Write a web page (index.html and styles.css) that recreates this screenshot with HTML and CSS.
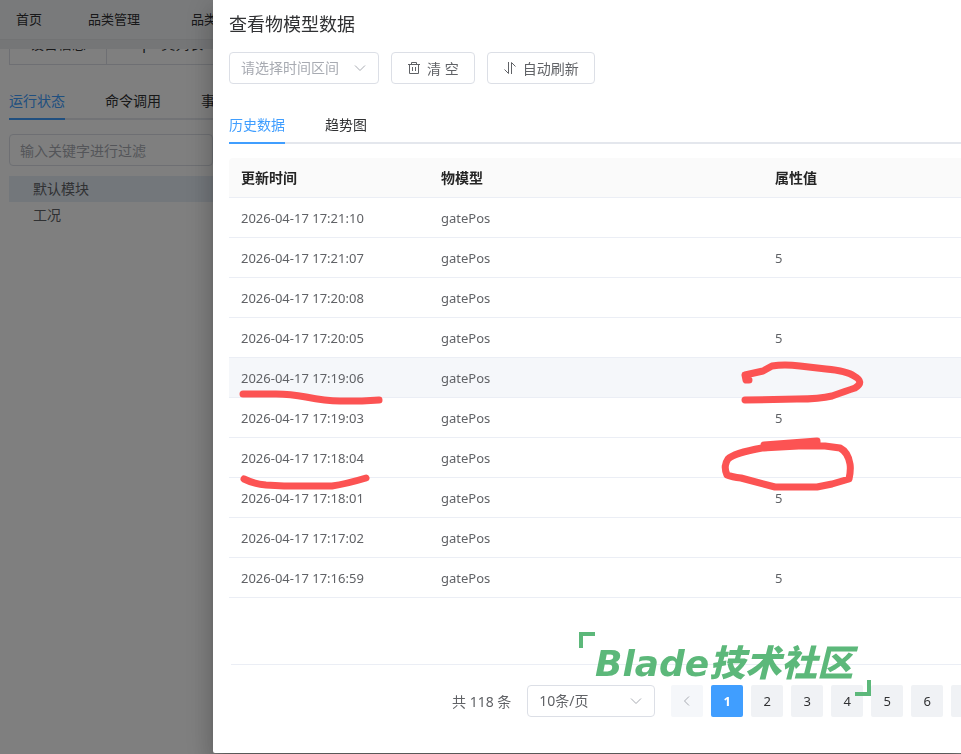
FILE: index.html
```html
<!DOCTYPE html>
<html lang="zh-CN">
<head>
  <meta charset="UTF-8">
  <title>查看物模型数据</title>
  <link rel="stylesheet" href="styles.css">
</head>
<body>
  <div class="page">
    <nav class="topnav">
      <a class="home" href="#">首页</a>
      <a href="#">品类管理</a>
      <a href="#">品类</a>
    </nav>
    <main class="content">
      <div class="card-tabs">
        <button>设备信息</button>
        <button>Topic类列表</button>
      </div>
      <div class="tabs">
        <button class="active">运行状态</button>
        <button>命令调用</button>
        <button>事件管理</button>
      </div>
      <div class="side">
        <input class="filter" type="text" placeholder="输入关键字进行过滤" aria-label="过滤">
        <ul class="tree">
          <li class="current">默认模块</li>
          <li>工况</li>
        </ul>
      </div>
    </main>
  </div>

  <div class="overlay">
    <section class="drawer">
      <h2>查看物模型数据</h2>
      <div class="toolbar">
        <div class="select range">
          <select aria-label="时间区间"><option>请选择时间区间</option></select>
          <svg viewBox="0 0 14 14"><path d="M2 4.5l5 5 5-5"/></svg>
        </div>
        <button class="btn">
          <svg viewBox="0 0 14 14"><path d="M1 3.5h12M4.5 3.5v-2h5v2M2.5 3.5v9h9v-9M5.5 6v4M8.5 6v4"/></svg>
          <span>清 空</span>
        </button>
        <button class="btn">
          <svg viewBox="0 0 14 14"><path d="M5.5 1v11.5L1.5 8.5M8.5 13V1.5l4 4"/></svg>
          <span>自动刷新</span>
        </button>
      </div>

      <div class="tabs">
        <button class="active">历史数据</button>
        <button>趋势图</button>
      </div>

      <table>
        <thead>
          <tr><th class="col-time">更新时间</th><th class="col-model">物模型</th><th>属性值</th></tr>
        </thead>
        <tbody>
          <tr><td>2026-04-17 17:21:10</td><td>gatePos</td><td></td></tr>
          <tr><td>2026-04-17 17:21:07</td><td>gatePos</td><td>5</td></tr>
          <tr><td>2026-04-17 17:20:08</td><td>gatePos</td><td></td></tr>
          <tr><td>2026-04-17 17:20:05</td><td>gatePos</td><td>5</td></tr>
          <tr class="hover"><td>2026-04-17 17:19:06</td><td>gatePos</td><td></td></tr>
          <tr><td>2026-04-17 17:19:03</td><td>gatePos</td><td>5</td></tr>
          <tr><td>2026-04-17 17:18:04</td><td>gatePos</td><td></td></tr>
          <tr><td>2026-04-17 17:18:01</td><td>gatePos</td><td>5</td></tr>
          <tr><td>2026-04-17 17:17:02</td><td>gatePos</td><td></td></tr>
          <tr><td>2026-04-17 17:16:59</td><td>gatePos</td><td>5</td></tr>
        </tbody>
      </table>

      <footer class="pager">
        <span class="total">共 118 条</span>
        <div class="select size">
          <select aria-label="每页条数"><option>10条/页</option></select>
          <svg viewBox="0 0 14 14"><path d="M2 4.5l5 5 5-5"/></svg>
        </div>
        <div class="pages">
          <button disabled aria-label="上一页"><svg viewBox="0 0 14 14"><path d="M9 2.5L4.5 7 9 11.5"/></svg></button>
          <button class="active">1</button>
          <button>2</button>
          <button>3</button>
          <button>4</button>
          <button>5</button>
          <button>6</button>
          <button aria-label="更多"></button>
        </div>
      </footer>

      <!-- pen marks over the table -->
      <svg class="marks" viewBox="230 355 640 140">
        <path d="M243 394H276Q290 394 306 397Q326 401 340 401H362L379 400"/>
        <path d="M244 479Q254 484 266 485L284 486H332Q346 484 366 478"/>
        <path d="M749 380L746 380L745 375L763 371L772 366Q784 364 800 366L826 369Q847 371 854 376Q865 382 855 388Q846 391 832 396Q820 399 797 399L745 400"/>
        <path d="M764 445L817 441V445L762 448Q734 453 728 459Q723 466 727 475Q732 477 741 478L775 487H817L832 484L849 479Q851 470 850 464Q848 452 840 448L825 446H790L764 448"/>
      </svg>
      <div class="watermark"><span class="latin">Blade</span>技术社区</div>
    </section>
  </div>
</body>
</html>
```
FILE: styles.css
```css
* {
  box-sizing: border-box;
}
body {
  margin: 0;
  height: 100vh;
  overflow: hidden;
  font-family: "Noto Sans", "Noto Sans CJK SC", sans-serif;
  font-size: 14px;
  color: #606266;
}
button, select, input {
  font: inherit;
  color: inherit;
}
button {
  cursor: pointer;
}
svg {
  width: 14px;
  height: 14px;
  fill: none;
  stroke: currentColor;
  stroke-width: 1;
}

/* page behind the drawer */
.page {
  height: 100%;
  display: flex;
  flex-direction: column;
  background: #fff;
}
.topnav {
  display: flex;
  align-items: center;
  gap: 51px;
  height: 40px;
  padding: 0 16px 2px;
  border-bottom: 1px solid #e4e6e9;
  background: #f3f5f7;
  font-size: 13px;
}
.topnav a {
  color: #303133;
  text-decoration: none;
}
.topnav .home {
  margin-right: -5px;
}
.content {
  flex: 1;
  padding: 0 9px;
  border-top: 9px solid #eaecef;
  overflow: hidden;
}
.card-tabs {
  display: flex;
  margin-top: -24px;
  border: 1px solid #dcdfe6;
}
.card-tabs button {
  height: 38px;
  padding: 0 20px 4px;
  border: 0;
  border-right: 1px solid #dcdfe6;
  background: none;
  color: #303133;
}
.tabs {
  display: flex;
  gap: 40px;
  border-bottom: 2px solid #e4e7ed;
}
.tabs button {
  height: 40px;
  margin-bottom: -2px;
  padding: 2px 0 0;
  border: 0;
  border-bottom: 2px solid transparent;
  background: none;
  color: #303133;
}
.tabs .active {
  color: #409eff;
  border-color: #409eff;
}
.content .tabs {
  margin: 15px 0 14px;
}
.side {
  width: 204px;
}
.filter {
  width: 100%;
  height: 32px;
  padding: 0 10px;
  border: 1px solid #dcdfe6;
  border-radius: 4px;
  background: #fff;
}
.filter::placeholder {
  color: #a8abb2;
}
.tree {
  margin: 10px 0;
  padding: 0;
  list-style: none;
}
.tree li {
  height: 26px;
  padding-left: 24px;
  line-height: 26px;
}
.tree .current {
  background: #e6eef7;
}

/* drawer */
.overlay {
  position: fixed;
  inset: 0;
  background: rgba(0, 0, 0, 0.5);
}
.drawer {
  position: absolute;
  top: 0;
  right: 0;
  bottom: 1px;
  left: 213px;
  padding: 12px 0 0 16px;
  border-bottom-left-radius: 2px;
  background: #fff;
  box-shadow: 0 8px 10px -5px rgba(0, 0, 0, 0.2), 0 16px 24px 2px rgba(0, 0, 0, 0.14), 0 6px 30px 5px rgba(0, 0, 0, 0.12);
}
.drawer h2 {
  margin: 0 0 16px;
  font-size: 18px;
  font-weight: normal;
  line-height: 24px;
  color: #303133;
}
.toolbar {
  display: flex;
  gap: 12px;
  margin-bottom: 20px;
}
.btn {
  display: flex;
  align-items: center;
  gap: 6px;
  height: 32px;
  padding: 0 15px 1px;
  border: 1px solid #dcdfe6;
  border-radius: 4px;
  background: #fff;
}
.select {
  display: grid;
  align-items: center;
  height: 32px;
  border: 1px solid #dcdfe6;
  border-radius: 4px;
}
.select select,
.select svg {
  grid-area: 1 / 1;
}
.select select {
  width: 100%;
  height: 30px;
  padding: 0 11px 2px;
  border: 0;
  background: none;
  appearance: none;
}
.select svg {
  justify-self: end;
  margin-right: 11px;
  color: #a8abb2;
  pointer-events: none;
}
.range {
  width: 150px;
}
.range select {
  color: #a8abb2;
}
.size {
  width: 128px;
}

table {
  width: 100%;
  margin-top: 14px;
  border-collapse: separate;
  border-spacing: 0;
  table-layout: fixed;
}
th, td {
  height: 40px;
  padding: 0 12px;
  border-bottom: 1px solid #ebeef5;
  text-align: left;
}
th {
  padding-bottom: 2px;
  background: #fafafa;
  color: #252525;
  font-weight: bold;
}
th:first-child {
  border-top-left-radius: 4px;
}
td {
  font-size: 13px;
}
.col-time {
  width: 200px;
}
.col-model {
  width: 334px;
}
.hover td {
  background: #f5f7fa;
}

.pager {
  display: flex;
  align-items: center;
  gap: 16px;
  margin: 66px 0 0 2px;
  padding: 20px 0 0 221px;
  border-top: 1px solid #ebeef5;
  white-space: nowrap;
  overflow: hidden;
}
.pager .select {
  flex: none;
}
.pages {
  display: flex;
  gap: 8px;
}
.pages button {
  display: flex;
  flex: none;
  align-items: center;
  justify-content: center;
  width: 32px;
  height: 32px;
  padding: 0;
  border: 0;
  border-radius: 2px;
  background: #f0f2f5;
  color: #303133;
  font-size: 13px;
}
.pages button:disabled {
  background: #f5f7fa;
  color: #a8abb2;
}
.pages .active {
  background: #409eff;
  color: #fff;
  font-weight: bold;
}

.marks {
  position: absolute;
  top: 355px;
  left: 17px;
  width: 640px;
  height: 140px;
  stroke: #fc5353;
  stroke-width: 7;
  stroke-linecap: round;
  stroke-linejoin: round;
  pointer-events: none;
}
.watermark {
  position: absolute;
  top: 632px;
  left: 366px;
  padding: 6px 18px 10px 16px;
  color: #5cb87a;
  font-family: "Noto Sans CJK SC", sans-serif;
  font-size: 36px;
  font-style: italic;
  font-weight: 900;
  line-height: 44px;
  white-space: nowrap;
  pointer-events: none;
}
.watermark .latin {
  font-family: "DejaVu Sans", sans-serif;
}
.watermark::before,
.watermark::after {
  content: "";
  position: absolute;
  width: 12px;
  height: 12px;
}
.watermark::before {
  top: 0;
  left: 0;
  border-top: 4px solid;
  border-left: 4px solid;
}
.watermark::after {
  right: 0;
  bottom: 0;
  border-right: 4px solid;
  border-bottom: 4px solid;
}
```
